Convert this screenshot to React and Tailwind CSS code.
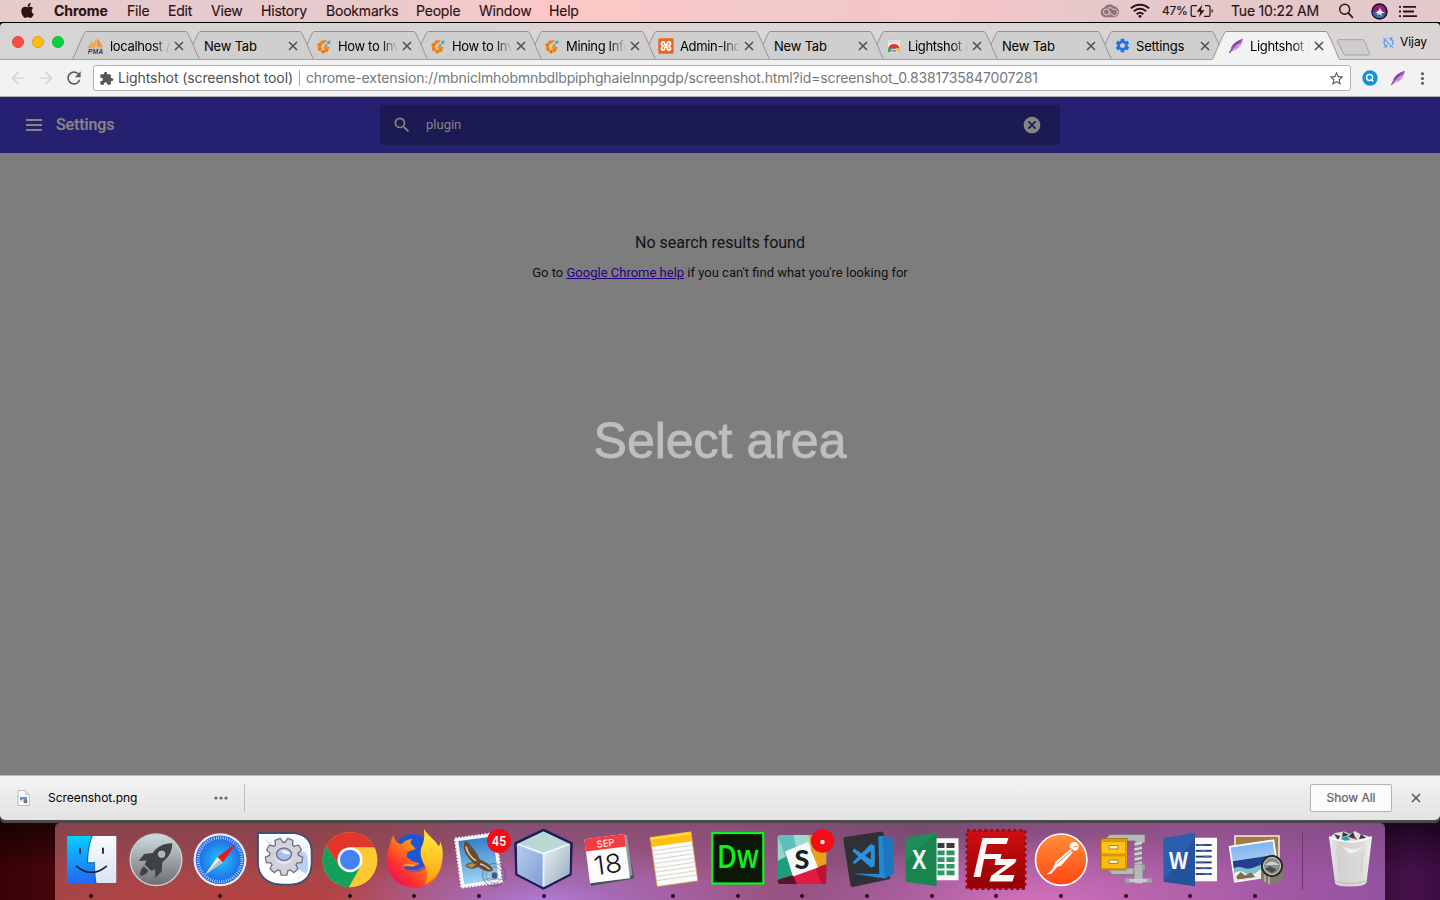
import React from "react";
import { FaApple } from "react-icons/fa";
import {
  MdArrowBack, MdArrowForward, MdRefresh, MdExtension, MdStarBorder, MdSettings,
  MdSearch, MdCancel, MdMoreVert, MdSyncDisabled,
} from "react-icons/md";

const menus = [
  ["File", "w-[41px]"], ["Edit", "w-[43px]"], ["View", "w-[50px]"], ["History", "w-[65px]"],
  ["Bookmarks", "w-[90px]"], ["People", "w-[63px]"], ["Window", "w-[70px]"], ["Help", "w-[40px]"],
];

function MenuBar() {
  return (
    <div className="flex h-[23px] shrink-0 items-center border-b border-black bg-[linear-gradient(90deg,#e6cbcb_0%,#e8cacb_25%,#f3c9c9_34%,#fdc7c7_38%,#fbc7c7_44%,#f2c8c9_52%,#f4c6c8_68%,#e6c8ca_76%,#e2c9ca_100%)] pl-5 text-[14px] text-[#2b1215] [-webkit-text-stroke:0.15px]">
      <FaApple className="mt-[-2px] h-[17px] w-[15px] shrink-0" />
      <div className="ml-[19px] w-[73px] font-bold tracking-[-0.05px]">Chrome</div>
      {menus.map(([label, w]) => (
        <div key={label} className={`${w} shrink-0 whitespace-nowrap tracking-[-0.2px]`}>{label}</div>
      ))}
      <div className="ml-auto flex items-center">
        <svg className="mr-[11px] h-4 w-5" viewBox="0 0 20 16" fill="none" stroke="#8d7476" strokeWidth="1.6">
          <path d="M6 14.2h8a5.5 5.5 0 0 0 1-11 6.3 6.3 0 0 0-10 1.5A4.9 4.9 0 0 0 6 14.2Z" fill="#8d7476" stroke="none" />
          <circle cx="7.4" cy="9" r="3" stroke="#e8cacb" strokeWidth="1" />
          <path d="m9.500 11.300 2 .6M9 5.200a3.700 3.700 0 0 1 5 1.200 3.200 3.200 0 1 1-.6 5.500L10 8.300" stroke="#e8cacb" strokeWidth="1" />
        </svg>
        <svg className="mr-3 h-4 w-5" viewBox="0 0 20 16" fill="none" stroke="#2b1215" strokeWidth="2">
          <path d="M.9 5.4a13 13 0 0 1 18.2 0M3.8 8.4a8.8 8.8 0 0 1 12.4 0M6.7 11.2a4.7 4.7 0 0 1 6.6 0" />
          <path d="M10 15.2 8.1 13a2.6 2.6 0 0 1 3.8 0Z" fill="#2b1215" stroke="none" />
        </svg>
        <div className="w-[28px] whitespace-nowrap text-[12px] tracking-[-0.3px]">47%</div>
        <svg className="mr-[17px] h-[14px] w-[24px]" viewBox="0 0 24 14" fill="none" stroke="#2b1215" strokeWidth="1.2">
          <path d="M7 1.6H2.6a1.4 1.4 0 0 0-1.4 1.4v8a1.4 1.4 0 0 0 1.4 1.4H6M15 1.6h3.6A1.4 1.4 0 0 1 20 3v8a1.4 1.4 0 0 1-1.4 1.4H14" />
          <path d="M12.3.8 6.7 7.8h3.6l-1.4 5.4 5.7-7h-3.7ZM21.6 5v4c1.8-.6 1.8-3.4 0-4Z" fill="#2b1215" stroke="none" />
        </svg>
        <div className="w-[107px] whitespace-nowrap tracking-[-0.2px]">Tue 10:22 AM</div>
        <svg className="mr-[17px] h-4 w-4" viewBox="0 0 16 16" fill="none" stroke="#2b1215" strokeWidth="1.4">
          <circle cx="6.7" cy="6.2" r="5" /><path d="m10.3 9.8 4.6 5" strokeWidth="1.7" />
        </svg>
        <svg className="mr-[11px] h-[17px] w-[17px]" viewBox="0 0 17 17">
          <defs>
            <linearGradient id="siri" x1="0" y1="0" x2="0" y2="1">
              <stop offset="0" stopColor="#e8206c" /><stop offset=".45" stopColor="#a12b8f" /><stop offset="1" stopColor="#1fb6dc" />
            </linearGradient>
          </defs>
          <circle cx="8.5" cy="8.5" r="8.2" fill="#160b2b" />
          <circle cx="8.5" cy="8.5" r="6.7" fill="url(#siri)" opacity=".75" />
          <path d="M9 4C9.500 7 10.500 8 14 10 10.500 9.800 10 10 11 13.500 9 11 8 10.500 6 12.500 7 10 6 9.500 3 10 7 8.500 8.500 7.500 9 4Z" fill="#e6ecfb" />
          <path d="M1.2 9c2 0 3.5 1.5 4.5 5L3 13Z" fill="#2a6bd8" />
        </svg>
        <svg className="mr-[22px] h-[13px] w-[19px]" viewBox="0 0 19 13" fill="#2b1215">
          <path d="M0 1h2v1.8H0zM4 1h13v1.8H4zM0 5.6h2v1.8H0zM4 5.6h11v1.8H4zM0 10.2h2v1.8H0zM4 10.2h14v1.8H4z" />
        </svg>
      </div>
    </div>
  );
}

function PmaIcon() {
  return (
    <svg className="h-4 w-4 overflow-visible" viewBox="0 0 16 16">
      <path d="M8 .5 3 9.4 7.6 8.6Z" fill="#f9a33c" /><path d="M8.6.5c3 2 5 5.500 5.800 8.700L8.700 8.600Z" fill="#f7922d" />
      <path d="M0 10 3.600 4l-.8 5.600ZM2 9.900l13 .2" fill="#fbb25e" stroke="#e58a2a" strokeWidth=".6" />
      <text x="-.3" y="15.600" fontSize="6.800" fontWeight="700" fontStyle="italic" fill="#32397f" fontFamily="Liberation Sans, sans-serif" textLength="15.500">PMA</text>
    </svg>
  );
}
function InvestIcon() {
  return (
    <svg className="h-4 w-4" viewBox="0 0 16 16">
      <path d="m11 1.500-5.500 1.200L1.500 6.500l.7 5.500 5 3.500 4.800-2.200 1.700-4.300-5-1-1.500 2 2 1-1.500 1.200-2-.7-.8-3 1.800-2.700 2.800-1.300Z" fill="#f28a1c" />
      <path d="m1.500 6.500 3.500.8M5.500 2.700l1.600 2.200M2.200 12l3.200-2M7 15.500l.8-3.300M12 13.300l-2.500-2" stroke="#c96307" strokeWidth=".9" />
      <path d="m10.800 3.400 3.700-1.200-.3 3.200-2.600.8Z" fill="#2db5c9" /><path d="m9 6 2.600.6-.8 1.700-2.200-.7Z" fill="#53a9a6" />
    </svg>
  );
}
function XamppIcon() {
  return (
    <svg className="h-4 w-4" viewBox="0 0 16 16">
      <rect x=".3" y=".3" width="15.400" height="15.400" rx="1.500" fill="#e9681f" />
      <path d="M5.300 3.800C3 3.800 2.800 6.600 4.800 7.500V8.500C2.800 9.400 3 12.200 5.300 12.200 7 12.200 6.600 10 6.700 9.200H9.300C9.400 10 9 12.200 10.700 12.200 13 12.200 13.200 9.400 11.200 8.500V7.500C13.200 6.600 13 3.800 10.700 3.800 9 3.800 9.400 6 9.300 6.800H6.700C6.600 6 7 3.800 5.300 3.800Z" fill="none" stroke="#fff" strokeWidth="1.700" strokeLinejoin="round" />
    </svg>
  );
}
function StoreIcon() {
  return (
    <svg className="h-4 w-4" viewBox="0 0 16 16">
      <path d="M5.500 2.500V1h5v1.500" stroke="#c6c6c6" fill="none" />
      <path d="M2 2.500h12V14H2Z" fill="#f4f4f4" /><path d="M2 2.500h12v3H2Z" fill="#dcdee0" />
      <path d="M2.300 10.200a5.800 5.300 0 0 1 11.400 0L8 11Z" fill="#dc3a2d" />
      <path d="M2 10v4h5l-1.600-4Z" fill="#45a350" /><path d="M14 10v4H9l1.500-4Z" fill="#f5c12c" />
      <path d="M5 14a3 2.800 0 1 1 6 0Z" fill="#4487ee" stroke="#fff" strokeWidth=".7" />
    </svg>
  );
}
function Feather({ className }) {
  return (
    <svg className={className} viewBox="0 0 16 16">
      <path d="M15.200.8C9 2.800 4 6 2.500 11.500L1 15l1 .2L4 13c6-.8 9.700-6 11.200-12.200Z" fill="#b887d4" />
      <path d="M15.200.8C9.600 2.500 4.600 5.500 2.800 11 6.500 7 10 4.500 15.200.8Z" fill="#7c3f9e" />
      <path d="M1.300 15C4 10 9 5.500 13.500 2.800" stroke="#5f2789" strokeWidth=".8" fill="none" />
      <path d="m5 11.200 5-.3M8 8l4.500-.5" stroke="#e8cdf2" strokeWidth=".7" />
    </svg>
  );
}

const tabs = [
  { title: "localhost /", icon: <PmaIcon /> },
  { title: "New Tab" },
  { title: "How to Inv", icon: <InvestIcon /> },
  { title: "How to Inv", icon: <InvestIcon /> },
  { title: "Mining Info", icon: <InvestIcon /> },
  { title: "Admin-Ino", icon: <XamppIcon /> },
  { title: "New Tab" },
  { title: "Lightshot (", icon: <StoreIcon /> },
  { title: "New Tab" },
  { title: "Settings", icon: <MdSettings className="h-[17px] w-[17px] text-[#1a73e8]" />, whole: true },
  { title: "Lightshot s", icon: <Feather className="h-4 w-4" />, active: true },
];

function Cross({ className }) {
  return (
    <svg className={className} viewBox="0 0 10 10" stroke="currentColor" strokeWidth="1.6">
      <path d="m1 1 8 8M9 1 1 9" />
    </svg>
  );
}

function Tab({ tab, index }) {
  const fades = tab.icon && !tab.whole;
  return (
    <div className="relative -ml-[14px] h-[29px] w-[128px] shrink-0" style={{ zIndex: tab.active ? 20 : 12 - index }}>
      <svg className="absolute inset-0 h-[29px] w-[128px]" viewBox="0 0 128 29">
        <path d="M0 28.500C1 28.500 12 .500 14 .500H114C116 .500 127 28.500 128 28.500V29H0Z" fill={tab.active ? "#f2f2f2" : "#d0cfcf"} />
        <path d="M.3 28.500C1.500 28 11.500 .500 14 .500H114C116.500 .500 126.500 28 127.700 28.500" fill="none" stroke="#949191" />
        {!tab.active && <path d="M0 28.500H128" stroke="#a5a2a2" />}
      </svg>
      <div className="relative flex h-[29px] items-center pl-4 pr-4">
        {tab.icon && <div className="mr-[5px] flex h-[17px] w-[17px] items-center">{tab.icon}</div>}
        <div className={`${tab.icon ? "w-[60px]" : "ml-[2px] w-[80px]"} ${fades ? "tracking-[-0.35px] [mask-image:linear-gradient(90deg,#000_72%,transparent_100%)]" : "tracking-[-0.2px]"} whitespace-nowrap text-[13px] leading-5 text-black`}>{tab.title}</div>
        <Cross className="ml-[4px] h-[10px] w-[10px] shrink-0 text-[#505050]" />
      </div>
    </div>
  );
}

function TabStrip() {
  return (
    <div className="flex h-[37px] shrink-0 items-end rounded-t-[4px] border-b border-[#a5a2a2] bg-[linear-gradient(90deg,#d7d4d4_0%,#d8d4d4_33%,#dfd3d3_40%,#dcd5d5_60%,#d9d5d4_100%)]">
      <div className="flex w-[86px] gap-2 self-center pl-3 pt-[2px]">
        <div className="h-3 w-3 rounded-full border border-[#e0403e] bg-[#fc4b48]" />
        <div className="h-3 w-3 rounded-full border border-[#dfa022] bg-[#fdbc05]" />
        <div className="h-3 w-3 rounded-full border border-[#12b53b] bg-[#06d341]" />
      </div>
      <div className="-mb-px flex">
        {tabs.map((t, i) => <Tab key={i} tab={t} index={i} />)}
      </div>
      <svg className="mb-[3px] ml-[-4px] h-[17px] w-[35px]" viewBox="0 0 35 17">
        <path d="M3 .7h23c1.500 0 2.300.6 2.800 2l4.500 11c.5 1.600 0 2.300-1.500 2.300H10c-1.500 0-2.300-.6-2.800-2L1.700 3C1.200 1.400 1.500.7 3 .7Z" fill="#cfcdcd" stroke="#a3a0a0" />
      </svg>
      <div className="ml-auto flex items-center self-center pr-[13px] pt-[2px]">
        <MdSyncDisabled className="mr-[4px] h-[15px] w-[15px] text-[#5f98ee]" />
        <div className="text-[12px] tracking-[-0.1px] text-black">Vijay</div>
      </div>
    </div>
  );
}

function Toolbar() {
  return (
    <div className="flex h-[37px] shrink-0 items-center border-b border-[#b3b3b3] bg-[#f2f2f2] pl-2">
      <MdArrowBack className="h-5 w-5 text-[#d4d4d4]" />
      <MdArrowForward className="ml-2 h-5 w-5 text-[#d4d4d4]" />
      <MdRefresh className="ml-2 h-5 w-5 text-[#5a5d61]" />
      <div className="ml-[9px] flex h-[26px] w-[1258px] items-center rounded-[3px] border border-[#b3b3b3] bg-white pl-[5px] pr-[5px] text-[14px]">
        <MdExtension className="h-[15px] w-[15px] text-[#55595d]" />
        <div className="ml-[4px] w-[181px] whitespace-nowrap tracking-[-0.1px] text-[#4c5053]">Lightshot (screenshot tool)</div>
        <div className="h-4 w-px bg-[#a8a8a8]" />
        <div className="ml-[6px] whitespace-nowrap tracking-[-0.147px] text-[#75787b]">chrome-extension://mbniclmhobmnbdlbpiphghaielnnpgdp/screenshot.html?id=screenshot_0.8381735847007281</div>
        <MdStarBorder className="ml-auto h-[17px] w-[17px] text-[#5a5d61]" />
      </div>
      <svg className="ml-[11px] h-4 w-4" viewBox="0 0 16 16">
        <circle cx="8" cy="8" r="7.700" fill="#0f93dc" />
        <circle cx="7.600" cy="7.500" r="3" fill="none" stroke="#fff" strokeWidth="1.400" /><path d="m9.300 9.300 2 2.300" stroke="#fff" strokeWidth="1.500" />
      </svg>
      <Feather className="ml-[12px] h-4 w-4" />
      <MdMoreVert className="ml-[7px] h-[19px] w-[19px] text-[#5a5d61]" />
    </div>
  );
}

function Page() {
  return (
    <div className="flex h-[678px] shrink-0 flex-col bg-[#7d7d7d] font-['Roboto',sans-serif]">
      <div className="flex h-14 shrink-0 items-center bg-[#25206f]">
        <svg className="ml-[26px] h-3 w-4" viewBox="0 0 16 12" fill="#858585"><path d="M0 0h16v2H0zM0 5h16v2H0zM0 10h16v2H0z" /></svg>
        <div className="ml-[14px] w-[324px] text-[16px] font-medium tracking-[-0.1px] text-[#858585] [-webkit-text-stroke:0.2px]">Settings</div>
        <div className="flex h-10 w-[680px] items-center rounded-[2px] bg-[#1c1a53] pl-[12px] pr-[18px] text-[13px] text-[#858585]">
          <MdSearch className="mr-[14px] h-5 w-5" />
          <span className="pb-px">plugin</span>
          <MdCancel className="ml-auto h-5 w-5" />
        </div>
      </div>
      <div className="pt-[80px] text-center text-[16px] leading-[20px] text-[#111]">No search results found</div>
      <div className="pt-[12px] text-center text-[13px] leading-[16px] text-[#111]">
        Go to <a className="text-[#2b0080] underline">Google Chrome help</a> if you can't find what you're looking for
      </div>
      <div className="pt-[130px] text-center font-['Liberation_Sans',sans-serif] text-[50px] leading-[60px] text-[#bdbebe] [-webkit-text-stroke:0.9px]">Select area</div>
    </div>
  );
}

function DownloadBar() {
  return (
    <div className="flex h-[45px] shrink-0 items-center rounded-b-[5px] border-t border-[#b5b5b5] bg-[linear-gradient(#f3f3f3,#e3e3e3)] shadow-[0_3px_1px_#4c4c4c]">
      <svg className="ml-[17px] h-4 w-[13px]" viewBox="0 0 13 16">
        <path d="M1 .600h7.500L12.400 4.500V15.400H1Z" fill="#fbfbfb" stroke="#adadad" strokeWidth=".8" /><path d="M8.500.600v4h4" fill="#ddd" stroke="#adadad" strokeWidth=".6" />
        <path d="M3 7h7v5H3Z" fill="#6b8fcb" /><path d="M3 10.500 6 9l4 3H3Z" fill="#e5e0d5" /><circle cx="8.500" cy="11.500" r="2" fill="#777" />
      </svg>
      <div className="ml-[18px] w-[166px] text-[12px] tracking-[-0.03px] text-black">Screenshot.png</div>
      <svg className="h-1 w-[14px]" viewBox="0 0 14 4" fill="#666"><circle cx="2" cy="2" r="1.600" /><circle cx="7" cy="2" r="1.600" /><circle cx="12" cy="2" r="1.600" /></svg>
      <div className="ml-[16px] h-7 w-px bg-[#bdbdbd]" />
      <div className="ml-auto flex h-7 w-[82px] items-center justify-center rounded-[2px] border border-[#b4b4b4] bg-[#fbfbfb] text-[12px] text-[#606060] [-webkit-text-stroke:0.2px]">Show All</div>
      <Cross className="ml-[19px] mr-[19px] h-[10px] w-[10px] text-[#5a5a5a]" />
    </div>
  );
}

/* Each dock drawing uses one shared coordinate space; Slot cuts out a 64px wide view around cx. */
function Slot({ cx, running = true, w = "w-[64.67px]", children }) {
  return (
    <div className={`flex ${w} shrink-0 flex-col items-center`}>
      <svg className="mt-1 h-[66px] w-16 overflow-visible" viewBox={`${cx - 32} 827 64 66`}>{children}</svg>
      {running && <div className="mt-[1px] h-[4px] w-[4px] rounded-full bg-[#21060f]" />}
    </div>
  );
}

const range = (n) => Array.from({ length: n }, (_, i) => i);

function Dock() {
  return (
    <div className="flex h-[77px] w-[1330px] rounded-t-[5px] bg-[radial-gradient(ellipse_220px_60px_at_490px_80px,#b07ad8_0%,#a76fc0cc_35%,transparent_100%),radial-gradient(ellipse_240px_70px_at_980px_80px,#d470bd_0%,#c46cb4aa_45%,transparent_100%),radial-gradient(ellipse_420px_50px_at_220px_85px,#b8423f_0%,transparent_100%),linear-gradient(180deg,#5a405055_0%,transparent_70%),linear-gradient(90deg,#9c464b_0%,#a5464c_22%,#9a5580_34%,#a05585_50%,#875080_65%,#a05599_76%,#a85aa6_88%,#9453a0_100%)] pl-[3.700px]">
      <Slot cx={91}>
        <defs>
          <linearGradient id="fnd" x1="0" y1="0" x2="0" y2="1"><stop offset="0" stopColor="#06cdfe" /><stop offset="1" stopColor="#2168f8" /></linearGradient>
          <linearGradient id="fndR" x1="0" y1="0" x2="0" y2="1"><stop offset="0" stopColor="#fafafc" /><stop offset="1" stopColor="#d8e4f2" /></linearGradient>
        </defs>
        <rect x="67" y="836" width="49.300" height="47" rx="1" fill="url(#fndR)" />
        <path d="M68 836H92.700C90 843 88 853 88 862.300H95C94.500 870 95.500 878 96.300 883H68a1 1 0 0 1-1-1V837a1 1 0 0 1 1-1Z" fill="url(#fnd)" />
        <path d="M92 836C89 843 87.500 853 87.500 862.800H94.500C94.500 870 95 878 96 883" fill="none" stroke="#193d66" strokeWidth=".6" />
        <path d="M80 848.500v4.500M103 848.500v4.500" stroke="#14202e" strokeWidth="1.800" strokeLinecap="round" />
        <path d="M76.700 866.300Q91.500 878.500 106.300 866.300" fill="none" stroke="#14202e" strokeWidth="1.600" strokeLinecap="round" />
      </Slot>
      <Slot cx={155.300} running={false}>
        <defs><linearGradient id="lp" x1="0" y1="0" x2="0" y2="1"><stop offset="0" stopColor="#cfdde1" /><stop offset="1" stopColor="#6d6c6c" /></linearGradient></defs>
        <circle cx="155.300" cy="859.700" r="25.800" fill="url(#lp)" stroke="#c5cdd0" strokeWidth="1.500" />
        <path d="M171.500 843.300C162 843.500 156.500 847 152 853L143.500 854 138 861 146 860.500 143.800 864.500 151 871 154.500 869 154.500 878 161 871.500 161.500 862.500C168 857.500 171.500 852 171.500 843.300Z" fill="#3e4145" />
        <path d="M143 866.500C140.500 868 139.500 871 139.300 875.800 143.500 875.500 146.500 873.500 147.500 870.500Z" fill="#3e4145" />
        <circle cx="161" cy="854.200" r="3.300" fill="#abb4b7" stroke="#dfe6e8" strokeWidth=".6" />
      </Slot>
      <Slot cx={220.300}>
        <defs><radialGradient id="saf"><stop offset="0" stopColor="#23c5f8" /><stop offset="1" stopColor="#1f62e6" /></radialGradient></defs>
        <circle cx="220.300" cy="859.700" r="26.500" fill="#e9ecef" />
        <circle cx="220.300" cy="859.700" r="24.300" fill="url(#saf)" />
        <circle cx="220.300" cy="859.700" r="22" fill="none" stroke="#cfeafc" strokeWidth="3" strokeDasharray=".8 1.500" />
        <path d="m236.700 843.300-19 13.800 5.300 5.300Z" fill="#f0151c" /><path d="m205.300 874.800 12.400-17.700 5.300 5.300Z" fill="#f1f3f5" /><path d="m205.300 874.800 15-15 2.700 2.600Z" fill="#b9bdc2" />
      </Slot>
      <Slot cx={285} running={false}>
        <path d="M258 833H290C304 833 311.500 839 311.500 852V863C311.500 878 302 884.500 290 884.500H283C267 884.500 258 876 258 862Z" fill="#f3f7fe" stroke="#3d5076" strokeWidth="2.200" />
        <path d="M259.500 834.500 288 862 300 881C296 883 292 883 289 883H283C268 883 259.500 875 259.500 862Z" fill="#fff" />
        <path d="M263 838 290 862 306 874C310 868 308 856 305 852L280 850Z" fill="#b9cff5" />
        <path d="M259.800 834.800H290C303 834.800 309.700 840.500 309.700 852V863C309.700 876.500 301.500 882.700 290 882.700H283C268 882.700 259.800 875.500 259.800 862Z" fill="none" stroke="#fff" strokeWidth="1.800" />
        <g transform="translate(284 856.700)">
          <g fill="#c6c5d0" stroke="#6f7081" strokeWidth="1.600" strokeLinejoin="round">
            {range(9).map((i) => <path key={i} d="M-4.300-12-2.700-18.300H2.700L4.300-12Z" transform={`rotate(${i * 40 + 20})`} />)}
            <circle r="14.300" />
          </g>
          <g fill="#d3d2da">
            {range(9).map((i) => <path key={i} d="M-3.700-12-2.300-17.800H2.300L3.700-12Z" transform={`rotate(${i * 40 + 20})`} />)}
            <circle r="13.800" />
          </g>
          <circle cy="-1.500" r="9" fill="#e6e5eb" />
          <ellipse cy="-2.500" rx="7.600" ry="6.200" fill="#a6c0ee" stroke="#77798d" strokeWidth="1.500" />
          <path d="M-4-6Q3-8 6.500-3Q2-1-4-6Z" fill="#f1f6fe" />
        </g>
      </Slot>
      <Slot cx={349.300}>
        <g transform="translate(349.300 859.700)">
          <circle r="27.500" fill="#fbc734" />
          <path d="M-23.800-13.700A27.500 27.500 0 0 1 23.900-13.600L24-12.300H0L-11 5.500Z" fill="#e4352d" />
          <path d="M-23.800-13.750A27.500 27.500 0 0 0-1 27.480L11.500 5.500-10.800 6Z" fill="#11a15b" />
          <path d="M23.800-12.300H0L11 6-1 27.480A27.500 27.500 0 0 0 23.800-12.300Z" fill="#fcc934" />
          <circle r="12.500" fill="#f6f7f8" /><circle r="10" fill="#4582f4" />
        </g>
      </Slot>
      <Slot cx={414.500}>
        <defs>
          <linearGradient id="ffx" x1="1" y1="0" x2="0" y2="1"><stop offset="0" stopColor="#ffde28" /><stop offset=".4" stopColor="#ff8a16" /><stop offset=".7" stopColor="#fb2f30" /><stop offset="1" stopColor="#e6007c" /></linearGradient>
          <linearGradient id="ffY" x1="0" y1="0" x2="0" y2="1"><stop offset="0" stopColor="#fff13b" /><stop offset="1" stopColor="#ff9b12" /></linearGradient>
        </defs>
        <circle cx="413" cy="852" r="18" fill="#1c55d6" />
        <path d="M394 835C391 839 392 842 390 846 384 860 388 875 399 883 412 891 429 889 437 877 441 871 443 864 443 857L434 862 425 869C417 875 407 874 404 866L411 867C415 867 417 865 420 864 418 861 413 863 410 859L407 857 408 852 416 849C415 846 411 845 411 842L413 839C408 839 404 842 402 844 398 844 395 840 394 835Z" fill="url(#ffx)" />
        <path d="M424.500 829C428 835 435 839 439 846 441 845 441 842 440 840 444 848 444 856 442 862 440 873 434 881 425 884 431 876 427 869 423 861 420 854 421 848 423 845 425 840 425 834 424.500 829Z" fill="url(#ffY)" />
        <path d="M404 866c3-3 8 0 11-1" stroke="#ffb32d" strokeWidth="1.500" fill="none" />
      </Slot>
      <Slot cx={480}>
        <defs><linearGradient id="mail" x1="0" y1="0" x2="0" y2="1"><stop offset="0" stopColor="#3380ca" /><stop offset="1" stopColor="#a0d4f2" /></linearGradient></defs>
        <g transform="rotate(-7.700 480 860)">
          <rect x="459" y="835.500" width="41" height="49.500" fill="#f7f8f8" stroke="#f7f8f8" strokeWidth="2" strokeDasharray="2 1.300" />
          <rect x="462" y="838.500" width="35" height="43.500" fill="url(#mail)" />
        </g>
        <path d="M465.500 842 468 841.500C473 847 478 852 480.500 859 486 862 492 864 494 870 489 874 483 869 479 867L473 869 466.500 866.500 467.500 864 473.500 862C468 857 463 850 465.500 842Z" fill="#6a4a30" />
        <path d="M467 846.500C468 852 472 858 477 860.500M481 864C485 864.500 488 867 491 869.500" stroke="#dccbb0" strokeWidth="1.600" fill="none" />
        <path d="m467 865.500 6-2.500 4 1.500-4 3.500Z" fill="#b8884e" />
        <g fill="none" stroke="#4d5670" opacity=".6"><circle cx="495" cy="875" r="11.500" /><circle cx="495" cy="875" r="8" strokeWidth=".7" /><path d="M485 879c3 2 4-2 7 0s4-2 7 0 5-2 8 0" strokeWidth=".7" /></g>
        <ellipse cx="495.500" cy="875.500" rx="2.800" ry="3.300" fill="#38435e" opacity=".85" />
        <circle cx="500" cy="841" r="12" fill="#f40d14" />
        <text x="500" y="845.500" textAnchor="middle" fontSize="13" fontWeight="600" fill="#fff" textLength="14.500" lengthAdjust="spacingAndGlyphs">45</text>
      </Slot>
      <Slot cx={543}>
        <defs>
          <linearGradient id="cubeL" x1="0" y1="0" x2="1" y2="1"><stop offset="0" stopColor="#b6cdea" /><stop offset="1" stopColor="#7f9cd5" /></linearGradient>
          <linearGradient id="cubeR" x1="0" y1="0" x2="1" y2="1"><stop offset="0" stopColor="#edf1f4" /><stop offset="1" stopColor="#92a9bd" /></linearGradient>
        </defs>
        <path d="M542.500 830 570.500 843.500 569.500 874.500 542.500 888.500 515.500 874.500 514.500 843.500Z" fill="#b6cfe5" stroke="#1b1e58" strokeWidth="2.500" strokeLinejoin="round" />
        <path d="m516 844 26.500 9.500V887l-26-13.500Z" fill="url(#cubeL)" /><path d="m569 844-26.500 9.500V887l26-13.500Z" fill="url(#cubeR)" />
        <path d="m542.500 831.500 25.500 12-25.500 10-25.500-10Z" fill="#b8d8d3" /><path d="m516.500 844 26 9.700 26-9.700M542.500 854v32" stroke="#ecf6fa" strokeWidth="1.800" fill="none" />
      </Slot>
      <Slot cx={608} running={false}>
        <path d="m585 842 40.500-7.500 8.500 41.500v2.500l-43 7.500Z" fill="#4a525b" /><path d="m589 841 38-6 5.500 40.500-40 6Z" fill="#8f979e" />
        <g transform="rotate(-7.300 607 858.500)">
          <rect x="587" y="836.500" width="40.300" height="44.500" fill="#fbfbfb" /><rect x="587" y="836.500" width="40.300" height="12.500" fill="#f33b40" />
          <text x="607.500" y="846.500" textAnchor="middle" fontSize="9.500" fill="#fff">SEP</text>
          <text x="607" y="873.500" textAnchor="middle" fontSize="26" fontWeight="300" fill="#161616" textLength="28" lengthAdjust="spacingAndGlyphs">18</text>
        </g>
      </Slot>
      <Slot cx={673}>
        <g transform="rotate(-8 673.700 859)">
          <rect x="653.500" y="834.500" width="41" height="49.500" fill="#fbfbfa" stroke="#d6a540" strokeWidth=".7" />
          <rect x="653.500" y="834.500" width="41" height="9.500" fill="#fcc20f" /><path d="M653.500 836h41" stroke="#ffd94c" strokeWidth="2" />
          {range(8).map((i) => <path key={i} d={`M654 ${848 + i * 4.300}h40`} stroke="#d4d3cf" strokeWidth=".9" />)}
        </g>
      </Slot>
      <Slot cx={737.700}>
        <rect x="712" y="833" width="51" height="50.500" fill="#0b1807" stroke="#0bf51b" strokeWidth="2.200" />
        <text x="737.700" y="868" textAnchor="middle" fontFamily="Open Sans, sans-serif" fontWeight="600" fontSize="33" fill="#12ef20" textLength="42" lengthAdjust="spacingAndGlyphs">Dw</text>
      </Slot>
      <Slot cx={802.500}>
        <defs><clipPath id="slk"><rect x="778" y="835" width="49" height="49" rx="3" /></clipPath></defs>
        <g clipPath="url(#slk)">
          <rect x="778" y="835" width="49" height="49" fill="#1ba07d" />
          <path d="M778 835h31l5 10-29 12-7-16Z" fill="#5fbfbd" /><path d="M778 835 786 857 778 861Z" fill="#94d4cd" /><path d="m794 835 20 0 4 12-20 6Z" fill="#9edbd1" />
          <path d="m809 835 18 0v31l-10 4Z" fill="#e8a31b" /><path d="m778 880 49-15v19h-49Z" fill="#e31b42" /><path d="m778 880 16-5 3 9h-19Z" fill="#56152d" /><path d="m816 868 11-4v20h-5Z" fill="#bd1230" />
          <path d="m785.500 851.500 23-9.500 10 25.500-25 9Z" fill="#f8f8f7" />
        </g>
        <text x="802.500" y="868.500" textAnchor="middle" fontFamily="Lato, sans-serif" fontSize="27" fontWeight="900" fill="#15212c">S</text>
        <circle cx="823" cy="841" r="11.700" fill="#f40d14" /><circle cx="823" cy="842" r="2.200" fill="#fff" />
      </Slot>
      <Slot cx={867.700}>
        <path d="M845.500 837 882 831.500Q884 831.500 884.500 834L891 879 853.500 887Q851.500 887 851 884.500L844 839.500Q843.800 837.500 845.500 837Z" fill="#303137" />
        <path d="m879 836.500 4-.8 11.500 3V874l-9 4.500-33-5 27.500.5Z" fill="#2589d2" /><path d="m883 836 11.500 2.700V874l-9 4.500Z" fill="#1669ad" opacity=".55" />
        <path d="m871.500 844 4 1.700v20.500l-4 1.300L853 851l2-2.500 16.500 11V851L855.500 864l-2.300-1.600Z" fill="#2a91dc" />
      </Slot>
      <Slot cx={931.500}>
        <path d="M934 838.300h24v42h-24Z" fill="#fafafa" />
        <path d="M937 843h7v5h-7zM946 843h8v5h-8z" fill="#3c3c3c" />
        {range(4).map((i) => <path key={i} d={`M937 ${850.500 + i * 6.700}h7v4.700h-7zM946 ${850.500 + i * 6.700}h8v4.700h-8z`} fill="#2c9564" />)}
        <path d="m905 837.700 31-5.400v54l-31-4.600Z" fill="#1f8d57" /><path d="m905 860 31-27v53.300l-31-4.600Z" fill="#127042" opacity=".3" />
        <text x="918.700" y="869" textAnchor="middle" fontFamily="Open Sans, sans-serif" fontSize="26" fontWeight="700" fill="#f1f4f1" textLength="14" lengthAdjust="spacingAndGlyphs">X</text>
      </Slot>
      <Slot cx={996.500}>
        <defs><linearGradient id="fz" x1="0" y1="0" x2="0" y2="1"><stop offset="0" stopColor="#cf0e10" /><stop offset="1" stopColor="#930205" /></linearGradient></defs>
        <rect x="967.500" y="830.500" width="58" height="58" fill="url(#fz)" stroke="#a80709" strokeWidth="3" strokeDasharray="3 2.800" />
        <rect x="969" y="832" width="55" height="55" fill="url(#fz)" />
        <path d="M983 838H1009L1007 844H987.500L985.500 854H1002L1001 859H984.500L981 877H974ZM996 859H1017L1015.500 863 999 875H1015L1013 881.500H990L991.500 876 1006.500 865H995Z" fill="#fbf8f8" />
      </Slot>
      <Slot cx={1061.300}>
        <defs><linearGradient id="pm" x1="0" y1="0" x2="0" y2="1"><stop offset="0" stopColor="#fd9038" /><stop offset="1" stopColor="#ff4514" /></linearGradient></defs>
        <circle cx="1061.500" cy="859.700" r="25.700" fill="url(#pm)" stroke="#fff" strokeWidth="1.600" />
        <circle cx="1074.500" cy="846.500" r="4.500" fill="#fff" /><path d="m1071 849-15 12.500-2 5.500 7-1 12-13.500Z" fill="#fff" /><path d="m1056 863-4 7-5.500 4.500 5-.7 8-9" fill="#fff" />
        <path d="m1073 850-16 14M1070 848l6 4M1074 847l4-1" stroke="#f96a2c" strokeWidth=".9" />
      </Slot>
      <Slot cx={1126}>
        <path d="M1106 838 1110 834.500H1145V843H1135V841H1112L1108 845ZM1106 868 1112 874.500H1134V871H1145V864H1134V868H1110Z" fill="#b4b7bb" stroke="#6d7176" strokeWidth=".7" />
        {range(9).map((i) => <path key={i} d={`M1134.500 ${844.500 + i * 2.500}l7.500-1.600`} stroke={i % 2 ? "#85898e" : "#d5d7d9"} strokeWidth="2.400" />)}
        <rect x="1134" y="864" width="9" height="20" fill="#b4b7bb" stroke="#6d7176" strokeWidth=".6" /><path d="M1125 880.500h26" stroke="#c9ccd0" strokeWidth="3.500" /><circle cx="1127" cy="880.500" r="2.600" fill="#9ea2a7" /><circle cx="1149.500" cy="880.500" r="2.600" fill="#9ea2a7" />
        <path d="M1100.500 840.500 1103 838.500H1127.500V867L1125.500 870H1100.500Z" fill="#e29b0a" stroke="#a36505" strokeWidth=".7" />
        <rect x="1101.500" y="841.500" width="24" height="12.500" fill="#fcc518" stroke="#c98307" strokeWidth=".6" /><rect x="1101.500" y="856" width="24" height="12.500" fill="#fbb914" stroke="#c98307" strokeWidth=".6" />
        <path d="M1109 849v-3.500h9v3.500ZM1109 863.500V860h9v3.500Z" fill="#fff3b5" stroke="#9b7d35" strokeWidth=".9" />
      </Slot>
      <Slot cx={1190.300}>
        <path d="M1194 837.700h23.300v43.500H1194Z" fill="#fafafa" />
        {range(6).map((i) => <path key={i} d={`M1196 ${845 + i * 5.800}h16`} stroke="#2f3544" strokeWidth="1.800" />)}
        {range(6).map((i) => <path key={i} d={`M${198 + 1000 + (i % 3) * 3} ${845 + i * 5.800}h6`} stroke="#3a6fc4" strokeWidth="1.800" />)}
        <path d="m1163.700 838.300 31.600-5.600v53.600l-31.600-4.600Z" fill="#2b5eae" /><path d="m1163.700 881.700 31.600-45v49.600Z" fill="#1c4485" opacity=".4" />
        <text x="1178.700" y="868.500" textAnchor="middle" fontFamily="Open Sans, sans-serif" fontSize="24" fontWeight="700" fill="#f5f7fa" textLength="19" lengthAdjust="spacingAndGlyphs">W</text>
      </Slot>
      <Slot cx={1255}>
        <defs><linearGradient id="sky" x1="0" y1="0" x2="0" y2="1"><stop offset="0" stopColor="#7fb4ee" /><stop offset="1" stopColor="#cce5fa" /></linearGradient></defs>
        <rect x="1235" y="836" width="44" height="34" fill="#a27a42" stroke="#f3eee3" strokeWidth="1.500" />
        <g transform="rotate(-8.500 1254 860)">
          <rect x="1231" y="842.500" width="46" height="37" fill="#f9f9f9" /><rect x="1232.800" y="844.300" width="42.400" height="33.400" fill="url(#sky)" />
          <rect x="1232.800" y="858" width="42.400" height="11" fill="#243f8e" /><path d="M1232.800 865.500q5-2 10 1t13 0 19.400 1v10.200h-42.400Z" fill="#7fc3d2" /><path d="M1232.800 870q6-3 11 2t12 0 9 5.700h-32Z" fill="#f2eee2" /><path d="m1234 874 5-4 4 4 6-2 4 5h-18Z" fill="#806b4b" />
        </g>
        <path d="M1261 866v11c0 10 22 10 22 0v-11Z" fill="#827a6d" /><path d="M1265 873v9M1269 875v9" stroke="#c8c1b2" strokeWidth="1.300" />
        <circle cx="1272" cy="866" r="10" fill="#716e69" stroke="#292a2b" strokeWidth="2" /><circle cx="1272" cy="866" r="8.500" fill="#8c8b86" stroke="#d3d3cf" strokeWidth="1" /><path d="M1265 865q7-7 14 0Z" fill="#c9d6df" /><path d="m1265 869 5-3 7 4-5 3Z" fill="#504b40" />
      </Slot>
      <div className="ml-[14.500px] mt-[10px] h-[57px] w-px bg-[#6a3472]" />
      <Slot cx={1349} running={false} w="ml-[15px] w-16">
        <defs><linearGradient id="bin" x1="0" y1="0" x2="1" y2="0"><stop offset="0" stopColor="#ececec" /><stop offset=".25" stopColor="#d3d2d1" /><stop offset=".75" stopColor="#dbdad9" /><stop offset="1" stopColor="#f0f0f0" /></linearGradient></defs>
        <path d="M1329 837 1334 833 1343 831.500 1349 834 1354 831 1359 834 1370 837 1366 844H1332Z" fill="#dfe0df" />
        <path d="m1333 834 6 2-2 4ZM1342 832l6 3-7 2ZM1352 832l3 7-8-2ZM1360 834l5 4-7 1Z" fill="#373b40" /><path d="m1340 838 6-2 3 4-6 1Z" fill="#20a1b0" /><path d="m1350 838 5-1 1 3Z" fill="#c2553e" />
        <path d="M1328 837Q1349 846 1371 837L1365.500 882.500Q1364 886.500 1349 886.500T1334 882.500Z" fill="url(#bin)" />
        <path d="M1328 837Q1349 846.500 1371 837" fill="none" stroke="#fbfbfb" strokeWidth="1.500" /><path d="M1341 846q10 6 20 1-6 8-14 6" fill="#f4f4f4" opacity=".8" />
        <path d="M1335 850q5 10 3 24M1364 850q-5 12-3 23" stroke="#c1bfbe" strokeWidth="1" fill="none" opacity=".6" />
        <path d="M1334 881Q1349 886 1365 881" fill="none" stroke="#bbbab9" />
      </Slot>
    </div>
  );
}

export default function App() {
  return (
    <div className="flex h-[900px] w-[1440px] flex-col overflow-hidden bg-[linear-gradient(180deg,#00000099_820px,transparent_870px),linear-gradient(90deg,#380306_0%,#43050a_3%,#3a1525_50%,#340b36_95%,#45104a_98%,#3c0c42_100%)] font-['Inter','Noto_Sans',sans-serif] leading-none">
      <div className="flex shrink-0 flex-col bg-black">
        <MenuBar />
        <TabStrip />
      </div>
      <Toolbar />
      <Page />
      <DownloadBar />
      <div className="mt-[3px] flex justify-center">
        <Dock />
      </div>
    </div>
  );
}
